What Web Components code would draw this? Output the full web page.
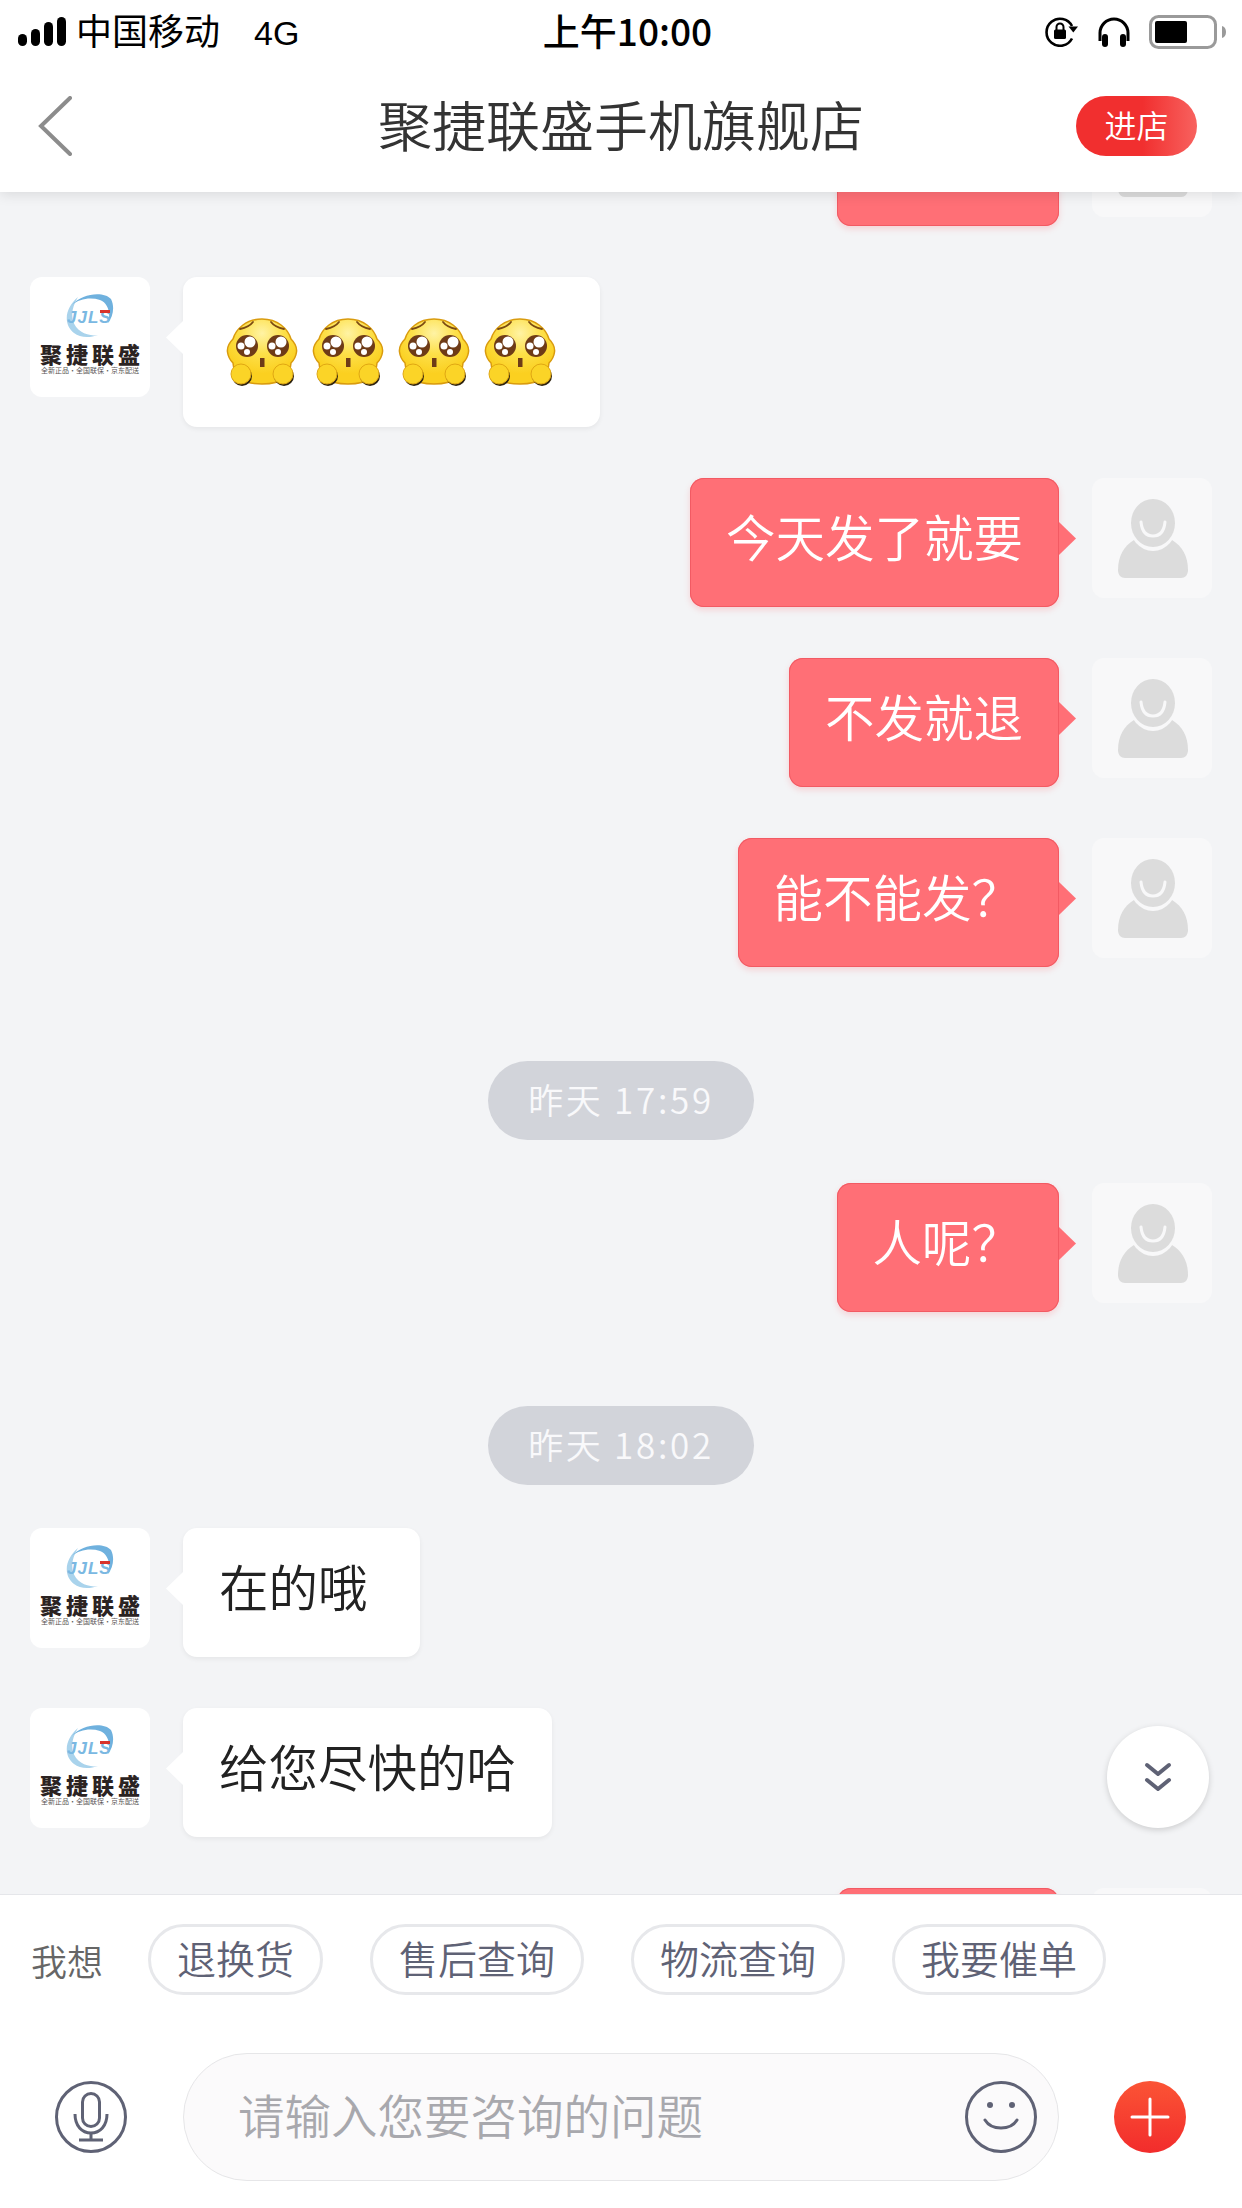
<!DOCTYPE html>
<html lang="zh-CN">
<head>
<meta charset="utf-8">
<title>聚捷联盛手机旗舰店</title>
<style>
  html, body { margin: 0; height: 100%; }
  body {
    font-family: "Noto Sans CJK SC", "Liberation Sans", sans-serif;
    background: #f3f4f6;
  }
</style>
</head>
<body>
<chat-app>
  <status-bar slot="status"></status-bar>
  <nav-bar slot="nav" title-text="聚捷联盛手机旗舰店"></nav-bar>

  <chat-message side="self" extra="150"></chat-message>
  <chat-message side="peer" kind="emoji"><emoji-face></emoji-face><emoji-face></emoji-face><emoji-face></emoji-face><emoji-face></emoji-face></chat-message>
  <chat-message side="self">今天发了就要</chat-message>
  <chat-message side="self">不发就退</chat-message>
  <chat-message side="self" extra="2">能不能发？</chat-message>
  <time-pill>昨天 17:59</time-pill>
  <chat-message side="self" extra="2">人呢？</chat-message>
  <time-pill>昨天 18:02</time-pill>
  <chat-message side="peer" extra="16">在的哦</chat-message>
  <chat-message side="peer">给您尽快的哈</chat-message>
  <chat-message side="self" extra="150"></chat-message>

  <chat-footer slot="footer"></chat-footer>
</chat-app>

<script>
class ChatApp extends HTMLElement {
  constructor() {
    super();
    this.attachShadow({ mode: 'open' });
  }

  connectedCallback() {
    this.shadowRoot.innerHTML = `
      <style>
        :host {
          display: flex;
          flex-direction: column;
          height: 2208px;
          width: 1242px;
          overflow: hidden;
        }
        header {
          background: #fff;
          box-shadow: 0 3px 12px rgba(0, 0, 0, 0.1);
          position: relative;
          z-index: 2;
        }
        main {
          flex: 1;
          min-height: 0;
          overflow: hidden;
          position: relative;
        }
        .list {
          display: flex;
          flex-direction: column;
          gap: 51px;
          margin-top: -95px;
          padding: 0 30px;
        }
        .to-bottom {
          position: absolute;
          right: 33px;
          bottom: 66px;
          width: 102px;
          height: 102px;
          border-radius: 50%;
          background: #fff;
          box-shadow: 0 2px 6px rgba(0, 0, 0, 0.16);
          display: flex;
          align-items: center;
          justify-content: center;
        }
      </style>
      <header>
        <slot name="status"></slot>
        <slot name="nav"></slot>
      </header>
      <main>
        <div class="list"><slot></slot></div>
        <div class="to-bottom">
          <svg width="28" height="32" viewBox="0 0 28 32" fill="none" stroke="#5f6275" stroke-width="4" stroke-linecap="round" stroke-linejoin="round">
            <path d="M3 4l11 9 11-9"/>
            <path d="M3 19l11 9 11-9"/>
          </svg>
        </div>
      </main>
      <slot name="footer"></slot>
    `;
  }
}

class StatusBar extends HTMLElement {
  constructor() {
    super();
    this.attachShadow({ mode: 'open' });
  }

  connectedCallback() {
    this.shadowRoot.innerHTML = `
      <style>
        :host {
          display: grid;
          grid-template-columns: 1fr auto 1fr;
          align-items: center;
          height: 60px;
          padding: 0 15px 0 18px;
          color: #000;
          font-size: 36px;
          font-weight: 400;
          font-family: "Liberation Sans", "Noto Sans CJK SC", sans-serif;
        }
        .left, .right { display: flex; align-items: center; }
        .left { gap: 10px; }
        .carrier { padding-top: 3px; }
        .net { margin-left: 24px; font-size: 34px; padding-top: 2px; }
        .time {
          font-size: 37px;
          font-weight: 500;
          padding-left: 10px;
          margin-top: -4px;
          font-family: "Noto Sans CJK SC", sans-serif;
        }
        .right { justify-content: flex-end; gap: 18px; }
        span { line-height: 60px; }
      </style>
      <div class="left">
        <svg width="48" height="30" viewBox="0 0 48 30" fill="#000">
          <rect x="0" y="17" width="9" height="12" rx="4.500"/>
          <rect x="13" y="12" width="9" height="17" rx="4.500"/>
          <rect x="26" y="5" width="9" height="24" rx="4.500"/>
          <rect x="39" y="0" width="9" height="29" rx="4.500"/>
        </svg>
        <span class="carrier">中国移动</span>
        <span class="net">4G</span>
      </div>
      <span class="time">上午10:00</span>
      <div class="right">
        <svg width="34" height="30" viewBox="0 0 34 30" fill="none">
          <path d="M27 21.500A13.500 13.500 0 1 1 27 9" stroke="#000" stroke-width="2.600"/>
          <path d="M23.500 9.500h9.500l-4.700 6z" fill="#000"/>
          <rect x="9" y="12.500" width="12" height="9.500" rx="1.500" fill="#000"/>
          <path d="M11.500 13v-3a3.500 3.500 0 0 1 7 0v3" stroke="#000" stroke-width="2"/>
        </svg>
        <svg width="34" height="30" viewBox="0 0 34 30" fill="none">
          <path d="M3 24V16a14 14 0 0 1 28 0v8" stroke="#000" stroke-width="3"/>
          <rect x="5" y="17" width="6" height="13" rx="3" fill="#000"/>
          <rect x="23" y="17" width="6" height="13" rx="3" fill="#000"/>
        </svg>
        <svg width="78" height="34" viewBox="0 0 78 34" fill="none">
          <rect x="1.500" y="1.500" width="65" height="31" rx="8" stroke="#9a9a9a" stroke-width="3"/>
          <rect x="6" y="6" width="32" height="22" rx="2" fill="#000"/>
          <path d="M73 11c2.500.500 4 3 4 6s-1.500 5.500-4 6z" fill="#9a9a9a"/>
        </svg>
      </div>
    `;
  }
}

class NavBar extends HTMLElement {
  constructor() {
    super();
    this.attachShadow({ mode: 'open' });
  }

  connectedCallback() {
    const titleText = this.getAttribute('title-text') || '';

    this.shadowRoot.innerHTML = `
      <style>
        :host {
          display: grid;
          grid-template-columns: 1fr auto 1fr;
          align-items: center;
          height: 132px;
          padding: 0 45px;
        }
        h1 {
          margin: 0;
          font-size: 54px;
          font-weight: 350;
          color: #333;
          line-height: 128px;
          padding-bottom: 4px;
        }
        .back { display: block; margin: 0 0 0 -7px; }
        .enter {
          justify-self: end;
          width: 121px;
          height: 60px;
          border-radius: 30px;
          background: linear-gradient(90deg, #f12f2f 55%, #f8625f);
          color: #fff;
          font-size: 32px;
          font-weight: 350;
          line-height: 56px;
          text-align: center;
        }
      </style>
      <svg class="back" width="34" height="60" viewBox="0 0 34 60" fill="none" stroke="#8c8c8c" stroke-width="4" stroke-linecap="round">
        <path d="M32 2L3 30l29 28"/>
      </svg>
      <h1>${titleText}</h1>
      <div class="enter">进店</div>
    `;
  }
}

class ChatMessage extends HTMLElement {
  constructor() {
    super();
    this.attachShadow({ mode: 'open' });
  }

  connectedCallback() {
    const side = this.getAttribute('side') || 'peer';
    const kind = this.getAttribute('kind') || 'text';
    const extra = this.getAttribute('extra') || 0;
    const avatar = side === 'self' ? '<user-avatar></user-avatar>' : '<shop-avatar></shop-avatar>';

    this.shadowRoot.innerHTML = `
      <style>
        :host {
          display: flex;
          align-items: flex-start;
          gap: 33px;
          flex-direction: ${side === 'self' ? 'row-reverse' : 'row'};
        }
        .bubble {
          position: relative;
          box-sizing: border-box;
          border-radius: 14px;
          font-size: 49.500px;
          font-weight: 350;
          white-space: nowrap;
        }
        .bubble::after {
          content: '';
          position: absolute;
          top: 44px;
          width: 17px;
          height: 33px;
        }
        .text {
          height: 129px;
          padding: 29px ${36 + Number(extra)}px 0 36px;
          line-height: 58px;
        }
        .emoji {
          display: flex;
          gap: 14px;
          padding: 41px 44px 41px 43px;
        }
        .self {
          background: #ff6f76;
          color: #fff;
          box-shadow: inset 0 0 0 1px #f25a63, 0 3px 6px rgba(255, 90, 100, 0.22);
        }
        .self::after {
          left: 100%;
          background: #ff6f76;
          clip-path: polygon(0 0, 100% 50%, 0 100%);
        }
        .peer {
          background: #fff;
          color: #222;
          box-shadow: 0 2px 5px rgba(0, 0, 0, 0.06);
        }
        .peer::after {
          right: 100%;
          background: #fff;
          clip-path: polygon(100% 0, 0 50%, 100% 100%);
        }
      </style>
      ${avatar}
      <div class="bubble ${side} ${kind}"><slot></slot></div>
    `;
  }
}

class ShopAvatar extends HTMLElement {
  constructor() {
    super();
    this.attachShadow({ mode: 'open' });
  }

  connectedCallback() {
    this.shadowRoot.innerHTML = `
      <style>
        :host {
          display: flex;
          flex-direction: column;
          align-items: center;
          flex: none;
          box-sizing: border-box;
          width: 120px;
          height: 120px;
          padding-top: 16px;
          background: #fff;
          border-radius: 12px;
          overflow: hidden;
        }
        svg { display: block; }
        .name {
          font-size: 22px;
          line-height: 24px;
          font-weight: 900;
          letter-spacing: 4px;
          margin: 2px -4px 0 0;
          color: #2b2322;
          white-space: nowrap;
        }
        .slogan {
          font-size: 7px;
          line-height: 10px;
          color: #5a5655;
          white-space: nowrap;
        }
      </style>
      <svg width="52" height="46" viewBox="0 0 52 46" fill="none">
        <path d="M14 4C2 14 -2 30 10 40C16 45 26 45 34 42C24 44 12 38 9 28C7 20 9 12 14 4Z" fill="#a9d3ec"/>
        <path d="M8 12C18 0 40 -2 47 6C51 14 49 24 44 30C47 20 44 10 36 7C26 4 15 6 8 12Z" fill="#6fb1de"/>
        <text x="3" y="30" font-family="Liberation Sans, sans-serif" font-size="17" font-style="italic" font-weight="700" fill="#7ab8e2" letter-spacing="1">JJLS</text>
        <rect x="36" y="17" width="10" height="3" fill="#d8342c"/>
      </svg>
      <div class="name">聚捷联盛</div>
      <div class="slogan">全新正品·全国联保·京东配送</div>
    `;
  }
}

class UserAvatar extends HTMLElement {
  constructor() {
    super();
    this.attachShadow({ mode: 'open' });
  }

  connectedCallback() {
    this.shadowRoot.innerHTML = `
      <style>
        :host {
          display: block;
          flex: none;
          width: 120px;
          height: 120px;
          background: #f8f8f9;
          border-radius: 12px;
        }
        svg { display: block; }
      </style>
      <svg width="120" height="120" viewBox="0 0 120 120">
        <path d="M26 92C26 78 32 68 42 62L80 62C90 68 96 78 96 92C96 97 93 100 89 100H33C29 100 26 97 26 92Z" fill="#dcdcdc"/>
        <ellipse cx="61" cy="46" rx="24" ry="27" fill="#f8f8f9"/>
        <ellipse cx="61" cy="45" rx="22" ry="24" fill="#dcdcdc"/>
        <path d="M49 44C50 54 55 58 61 58C67 58 72 54 73 44" fill="none" stroke="#f8f8f9" stroke-width="3" stroke-linecap="round"/>
      </svg>
    `;
  }
}

class EmojiFace extends HTMLElement {
  constructor() {
    super();
    this.attachShadow({ mode: 'open' });
  }

  connectedCallback() {
    this.shadowRoot.innerHTML = `
      <style>
        :host { display: block; width: 72px; height: 68px; }
        svg { display: block; }
      </style>
      <svg width="72" height="68" viewBox="0 0 72 68">
        <defs>
          <radialGradient id="skin" cx="50%" cy="22%" r="62%">
            <stop offset="0" stop-color="#fff3a4"/>
            <stop offset="0.5" stop-color="#fde04a"/>
            <stop offset="1" stop-color="#fbd020"/>
          </radialGradient>
        </defs>
        <path d="M36 1C20 1 10 11 7 21C3 25 1 30 1.500 34C2 38 4 42 7 45C8 58 14 66 36 66C58 66 64 58 65 45C68 42 70 38 70.500 34C71 30 69 25 65 21C62 11 52 1 36 1Z" fill="url(#skin)" stroke="#d99b0e" stroke-width="1.500"/>
        <path d="M14 11C19 10 24 8 27 4" fill="none" stroke="#7b4a12" stroke-width="1.800" stroke-linecap="round"/>
        <path d="M58 11C53 10 48 8 45 4" fill="none" stroke="#7b4a12" stroke-width="1.800" stroke-linecap="round"/>
        <circle cx="21" cy="28" r="11" fill="#6e3b17"/>
        <circle cx="52" cy="28" r="11" fill="#6e3b17"/>
        <circle cx="24" cy="24" r="5.500" fill="#fff"/>
        <circle cx="15" cy="28" r="3.500" fill="#fff"/>
        <circle cx="21" cy="34" r="3" fill="#fff"/>
        <circle cx="55" cy="24" r="5.500" fill="#fff"/>
        <circle cx="46" cy="28" r="3.500" fill="#fff"/>
        <circle cx="52" cy="34" r="3" fill="#fff"/>
        <rect x="34" y="40" width="4.500" height="9" fill="#6e3b17"/>
        <circle cx="16" cy="58" r="10" fill="#2f2410"/>
        <circle cx="58" cy="58" r="10" fill="#2f2410"/>
        <circle cx="15" cy="56" r="10" fill="#fbd427" stroke="#e0a713" stroke-width="1"/>
        <circle cx="57" cy="56" r="10" fill="#fbd427" stroke="#e0a713" stroke-width="1"/>
      </svg>
    `;
  }
}

class TimePill extends HTMLElement {
  constructor() {
    super();
    this.attachShadow({ mode: 'open' });
  }

  connectedCallback() {
    this.shadowRoot.innerHTML = `
      <style>
        :host {
          display: block;
          align-self: center;
          box-sizing: border-box;
          height: 79px;
          margin: 43px 0 -8px;
          padding: 0 40px;
          border-radius: 40px;
          background: #d2d4da;
          color: #f9f9fb;
          font-size: 35px;
          font-weight: 350;
          letter-spacing: 2.700px;
          line-height: 75px;
          white-space: nowrap;
        }
      </style>
      <slot></slot>
    `;
  }
}

class ChatFooter extends HTMLElement {
  constructor() {
    super();
    this.attachShadow({ mode: 'open' });
  }

  connectedCallback() {
    const chips = ['退换货', '售后查询', '物流查询', '我要催单'];

    this.shadowRoot.innerHTML = `
      <style>
        :host {
          display: block;
          position: relative;
          z-index: 1;
          box-sizing: border-box;
          height: 314px;
          padding-top: 29px;
          background: #fff;
          border-top: 1px solid #e5e6ea;
        }
        .quick {
          display: flex;
          align-items: center;
          gap: 47px;
          padding-left: 31px;
        }
        .quick span { font-size: 36px; font-weight: 350; color: #666; margin-right: -2px; }
        .chip {
          box-sizing: border-box;
          height: 71px;
          padding: 0 26px;
          border: 3px solid #e7e8eb;
          border-radius: 36px;
          font-size: 39px;
          font-weight: 350;
          line-height: 61px;
          color: #5f6275;
        }
        .input-row {
          display: flex;
          align-items: center;
          margin-top: 58px;
          padding-left: 55px;
        }
        .box {
          flex: none;
          box-sizing: border-box;
          width: 876px;
          height: 128px;
          margin: 0 55px 0 56px;
          padding: 0 21px 0 54px;
          display: flex;
          align-items: center;
          justify-content: space-between;
          background: #fbfafb;
          border: 1px solid #e6e6e8;
          border-radius: 64px;
          font-size: 46.500px;
          font-weight: 350;
          color: #a8a8ad;
        }
        .box span { margin-top: -8px; }
        svg { display: block; flex: none; }
      </style>
      <div class="quick">
        <span>我想</span>
        ${chips.map((chip) => `<div class="chip">${chip}</div>`).join('')}
      </div>
      <div class="input-row">
        <svg width="72" height="72" viewBox="0 0 72 72" fill="none" stroke="#5f6275" stroke-width="3">
          <circle cx="36" cy="36" r="34.500"/>
          <rect x="27.500" y="12.500" width="17" height="33" rx="8.500"/>
          <path d="M20 33c0 12 7 19 16 19s16-7 16-19"/>
          <path d="M36 52v7M24 59h24"/>
        </svg>
        <div class="box">
          <span>请输入您要咨询的问题</span>
          <svg width="72" height="72" viewBox="0 0 72 72" fill="none" stroke="#5f6275" stroke-width="3">
            <circle cx="36" cy="36" r="34.500"/>
            <circle cx="25" cy="24" r="3" fill="#5f6275" stroke="none"/>
            <circle cx="47" cy="24" r="3" fill="#5f6275" stroke="none"/>
            <path d="M20 39c3 5 9 8 16 8s13-3 16-8" stroke-width="3" stroke-linecap="round"/>
          </svg>
        </div>
        <svg width="72" height="72" viewBox="0 0 72 72" fill="none">
          <defs>
            <linearGradient id="plus" x1="0" y1="0" x2="0" y2="1">
              <stop offset="0" stop-color="#fb5435"/>
              <stop offset="1" stop-color="#f22c2c"/>
            </linearGradient>
          </defs>
          <circle cx="36" cy="36" r="36" fill="url(#plus)"/>
          <path d="M18 36h36M36 18v36" stroke="#fff" stroke-width="3" stroke-linecap="round"/>
        </svg>
      </div>
    `;
  }
}

customElements.define('chat-app', ChatApp);
customElements.define('status-bar', StatusBar);
customElements.define('nav-bar', NavBar);
customElements.define('chat-message', ChatMessage);
customElements.define('shop-avatar', ShopAvatar);
customElements.define('user-avatar', UserAvatar);
customElements.define('emoji-face', EmojiFace);
customElements.define('time-pill', TimePill);
customElements.define('chat-footer', ChatFooter);
</script>
</body>
</html>
